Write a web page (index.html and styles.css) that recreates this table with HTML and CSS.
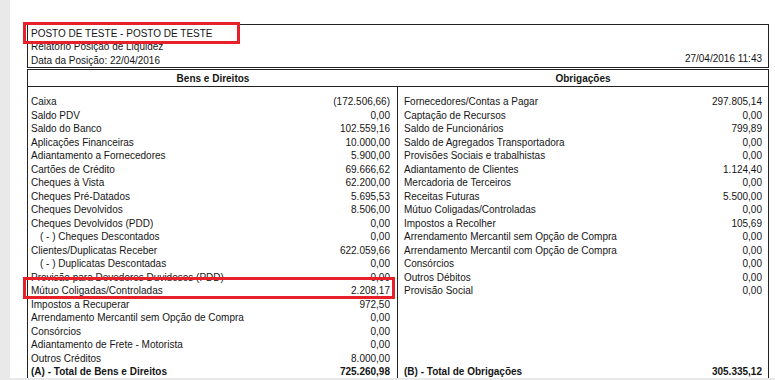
FILE: index.html
```html
<!DOCTYPE html>
<html lang="pt-BR">
<head>
<meta charset="utf-8">
<title>Relatório Posição de Liquidez</title>
<link rel="stylesheet" href="styles.css">
</head>
<body>
<div class="page">
  <div class="sheet">
    <div class="head">
      <div class="head-left">
        <div class="line">POSTO DE TESTE - POSTO DE TESTE</div>
        <div class="line">Relatorio Posição de Liquidez</div>
        <div class="line">Data da Posição: 22/04/2016</div>
      </div>
      <div class="head-date">27/04/2016 11:43</div>
    </div>
    <div class="report">
      <div class="sections">
        <div class="sec">Bens e Direitos</div>
        <div class="sec">Obrigações</div>
      </div>
      <div class="cols">
        <div class="col col-left">
          <div class="row"><span>Caixa</span><span>(172.506,66)</span></div>
          <div class="row"><span>Saldo PDV</span><span>0,00</span></div>
          <div class="row"><span>Saldo do Banco</span><span>102.559,16</span></div>
          <div class="row"><span>Aplicações Financeiras</span><span>10.000,00</span></div>
          <div class="row"><span>Adiantamento a Fornecedores</span><span>5.900,00</span></div>
          <div class="row"><span>Cartões de Crédito</span><span>69.666,62</span></div>
          <div class="row"><span>Cheques à Vista</span><span>62.200,00</span></div>
          <div class="row"><span>Cheques Pré-Datados</span><span>5.695,53</span></div>
          <div class="row"><span>Cheques Devolvidos</span><span>8.506,00</span></div>
          <div class="row"><span>Cheques Devolvidos (PDD)</span><span>0,00</span></div>
          <div class="row indent"><span>( - ) Cheques Descontados</span><span>0,00</span></div>
          <div class="row"><span>Clientes/Duplicatas Receber</span><span>622.059,66</span></div>
          <div class="row indent"><span>( - ) Duplicatas Descontadas</span><span>0,00</span></div>
          <div class="row"><span>Provisão para Devedores Duvidosos (PDD)</span><span>0,00</span></div>
          <div class="row"><span>Mútuo Coligadas/Controladas</span><span>2.208,17</span></div>
          <div class="row"><span>Impostos a Recuperar</span><span>972,50</span></div>
          <div class="row"><span>Arrendamento Mercantil sem Opção de Compra</span><span>0,00</span></div>
          <div class="row"><span>Consórcios</span><span>0,00</span></div>
          <div class="row"><span>Adiantamento de Frete - Motorista</span><span>0,00</span></div>
          <div class="row"><span>Outros Créditos</span><span>8.000,00</span></div>
          <div class="row total"><span>(A) - Total de Bens e Direitos</span><span>725.260,98</span></div>
        </div>
        <div class="col col-right">
          <div class="row"><span>Fornecedores/Contas a Pagar</span><span>297.805,14</span></div>
          <div class="row"><span>Captação de Recursos</span><span>0,00</span></div>
          <div class="row"><span>Saldo de Funcionários</span><span>799,89</span></div>
          <div class="row"><span>Saldo de Agregados Transportadora</span><span>0,00</span></div>
          <div class="row"><span>Provisões Sociais e trabalhistas</span><span>0,00</span></div>
          <div class="row"><span>Adiantamento de Clientes</span><span>1.124,40</span></div>
          <div class="row"><span>Mercadoria de Terceiros</span><span>0,00</span></div>
          <div class="row"><span>Receitas Futuras</span><span>5.500,00</span></div>
          <div class="row"><span>Mútuo Coligadas/Controladas</span><span>0,00</span></div>
          <div class="row"><span>Impostos a Recolher</span><span>105,69</span></div>
          <div class="row"><span>Arrendamento Mercantil sem Opção de Compra</span><span>0,00</span></div>
          <div class="row"><span>Arrendamento Mercantil com Opção de Compra</span><span>0,00</span></div>
          <div class="row"><span>Consórcios</span><span>0,00</span></div>
          <div class="row"><span>Outros Débitos</span><span>0,00</span></div>
          <div class="row"><span>Provisão Social</span><span>0,00</span></div>
          <div class="spacer"></div>
          <div class="row total"><span>(B) - Total de Obrigações</span><span>305.335,12</span></div>
        </div>
      </div>
    </div>
  </div>
  <div class="mark mark-title"></div>
  <div class="mark mark-row"></div>
</div>
</body>
</html>
```
FILE: styles.css
```css
html, body {
  margin: 0;
  padding: 0;
}
body {
  width: 775px;
  height: 380px;
  overflow: hidden;
  background: #e9e9e9;
  font-family: "Liberation Sans", Arial, sans-serif;
  font-size: 10px;
  color: #151515;
}
.page {
  position: relative;
  margin-left: 10px;
  width: 765px;
  height: 378px;
  background: #fff;
  padding-top: 24px;
  box-sizing: border-box;
  overflow: hidden;
}
.sheet {
  margin-left: 17px;
  width: 742px;
}
.head {
  display: flex;
  justify-content: space-between;
  align-items: flex-end;
  border: 1px solid #222;
  padding: 3px 6px 0 3px;
  height: 44px;
  box-sizing: border-box;
}
.line {
  line-height: 13.5px;
  white-space: nowrap;
}
.head-date {
  line-height: 13.5px;
  padding-bottom: 2px;
}
.report {
  margin-top: 1px;
  border-top: 1px solid #222;
  border-left: 1px solid #222;
  border-right: 1px solid #222;
}
.sections {
  display: grid;
  grid-template-columns: 370px 1fr;
  height: 17px;
  border-bottom: 1px solid #222;
  box-sizing: border-box;
}
.sec {
  font-weight: bold;
  text-align: center;
  line-height: 17px;
}
.cols {
  display: grid;
  grid-template-columns: 370px 1fr;
}
.col {
  display: flex;
  flex-direction: column;
  padding-top: 8px;
  height: 300px;
  box-sizing: border-box;
}
.col-left {
  border-right: 1px solid #222;
  padding-left: 3px;
  padding-right: 7px;
}
.col-right {
  padding-left: 6px;
  padding-right: 6px;
}
.row {
  display: flex;
  justify-content: space-between;
  flex: none;
  height: 13.5px;
  line-height: 13.5px;
  white-space: nowrap;
}
.indent {
  padding-left: 9px;
}
.total {
  font-weight: bold;
}
.spacer {
  flex: none;
  height: 67.5px;
}
.mark {
  position: absolute;
  border: 3px solid #e8202a;
  box-sizing: border-box;
}
.mark-title {
  left: 13px;
  top: 22px;
  width: 217px;
  height: 22px;
}
.mark-row {
  left: 13px;
  top: 277px;
  width: 372px;
  height: 22px;
}
```
